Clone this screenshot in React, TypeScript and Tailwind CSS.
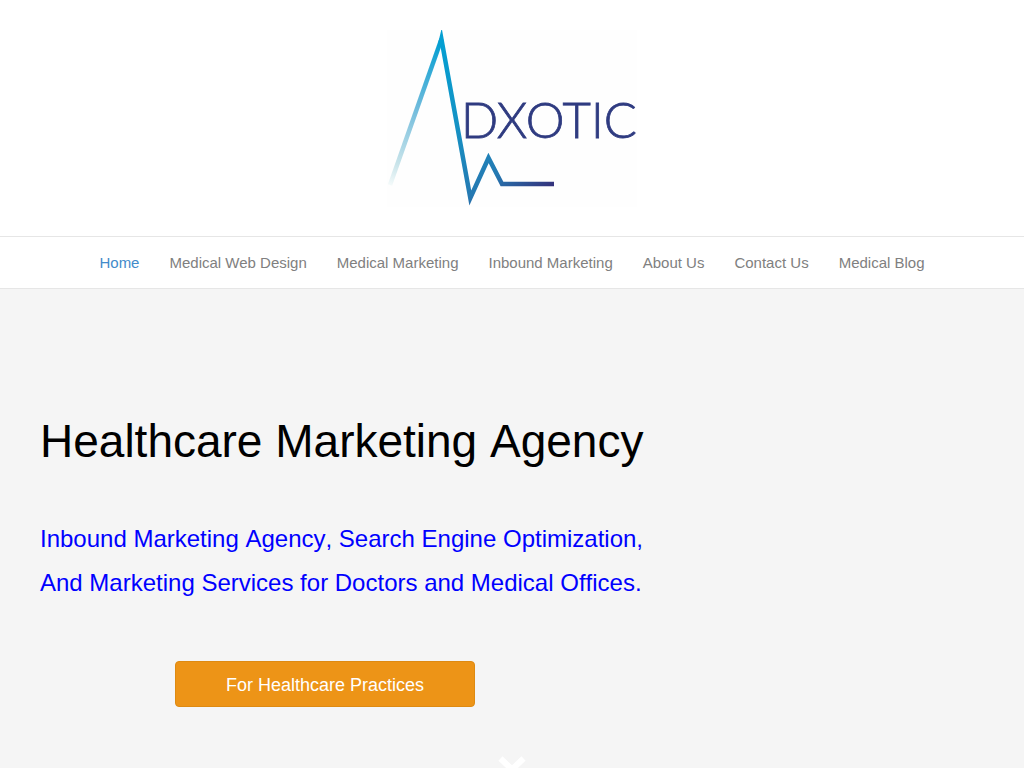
const links = [
  'Home',
  'Medical Web Design',
  'Medical Marketing',
  'Inbound Marketing',
  'About Us',
  'Contact Us',
  'Medical Blog',
];

function Logo() {
  return (
    <svg width="250" height="177" viewBox="0 0 250 177" role="img" aria-label="Adxotic">
      <defs>
        <linearGradient id="rise" gradientUnits="userSpaceOnUse" x1="3" y1="155" x2="54" y2="15">
          <stop offset="0" stopColor="#f4fafa" />
          <stop offset="0.15" stopColor="#c9e4ea" />
          <stop offset="0.55" stopColor="#6fbbdc" />
          <stop offset="1" stopColor="#069fd2" />
        </linearGradient>
        <linearGradient id="fall" gradientUnits="userSpaceOnUse" x1="54" y1="15" x2="166" y2="155">
          <stop offset="0" stopColor="#049fd2" />
          <stop offset="0.4" stopColor="#1592c4" />
          <stop offset="0.76" stopColor="#2579b2" />
          <stop offset="1" stopColor="#34327c" />
        </linearGradient>
      </defs>
      <rect width="250" height="177" fill="#fefefe" />
      <path d="M3 155 L54.500 9" fill="none" stroke="url(#rise)" strokeWidth="4.500" />
      <path
        d="M53.200 14 L54.400 9 L83.300 168 L101.500 128 L115 154 H167"
        fill="none"
        stroke="url(#fall)"
        strokeWidth="4.500"
        strokeMiterlimit="12"
      />
      <text
        x="74"
        y="108"
        fill="#2f3b80"
        stroke="#2f3b80"
        strokeWidth="0.800"
        className="font-[Lato,sans-serif] text-[49px] font-light"
      >
        DXOTIC
      </text>
    </svg>
  );
}

export default function App() {
  return (
    <div className="flex h-screen flex-col overflow-hidden bg-white font-['Liberation_Sans',Arial,sans-serif]">
      <header className="shrink-0">
        <a href="#" className="flex justify-center pt-[30px] pb-[29px]">
          <Logo />
        </a>
        <nav className="flex h-[53px] items-center justify-center gap-[30px] border-y border-[#e6e6e6] pt-0.5 text-[15px] text-[#808080]">
          {links.map((label) => (
            <a
              key={label}
              href="#"
              className={label === 'Home' ? 'whitespace-nowrap text-[#428bca]' : 'whitespace-nowrap'}
            >
              {label}
            </a>
          ))}
        </nav>
      </header>
      <main className="flex grow flex-col bg-[#f5f5f5] px-10 pt-[120px] [font-kerning:none]">
        <h1 className="text-[46px] leading-[64px] text-black">Healthcare Marketing Agency</h1>
        <p className="mt-11 text-[24px] leading-[44px] text-[#0000ff]">
          Inbound Marketing Agency, Search Engine Optimization,
          <br />
          And Marketing Services for Doctors and Medical Offices.
        </p>
        <div className="flex w-full max-w-[570px] justify-center pt-14">
          <button className="h-[46px] w-[300px] rounded border border-[#de8a12] bg-[#ed9417] pt-0.5 text-[18px] text-white">
            For Healthcare Practices
          </button>
        </div>
        <button aria-label="Scroll down" className="mt-12 flex justify-center self-center">
          <svg width="28" height="20" viewBox="0 0 28 20" fill="none" stroke="white" strokeWidth="6">
            <path d="M2.500 3.500 L14 14.500 L25.500 3.500" />
          </svg>
        </button>
      </main>
    </div>
  );
}
